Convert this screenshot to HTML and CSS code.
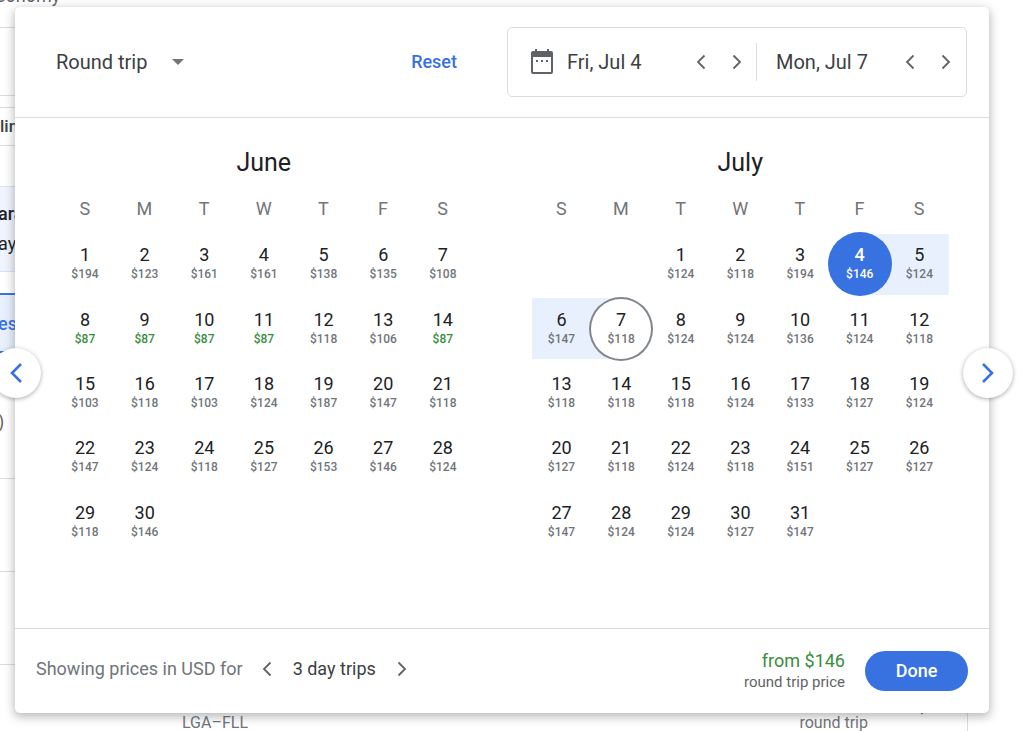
FILE: index.html
```html
<!DOCTYPE html>
<html lang="en">
  <head>
    <meta charset="UTF-8" />
    <meta name="viewport" content="width=device-width, initial-scale=1.0" />
    <title>Flights - pick dates</title>
    <link rel="stylesheet" href="styles.css">
  </head>
  <body>
    <!-- results page behind the dialog -->
    <div class="results">
      <div class="cabin">conomy</div>
      <div class="search-box"></div>
      <div class="chip">lines</div>
      <div class="track">
        <b>arate</b>
        <span>ay</span>
      </div>
      <div class="tab">es</div>
      <div class="row first">)</div>
      <div class="row"></div>
      <div class="row"></div>
      <div class="flight">
        <span class="route">LGA–FLL</span>
        <span class="fare">round trip</span>
        <svg class="expand" viewBox="0 0 16 10"><path d="M2 2l6 6 6-6" /></svg>
      </div>
    </div>

    <div class="dialog" role="dialog" aria-label="Choose dates">
      <div class="header">
        <div class="trip-type">
          <select aria-label="Trip type">
            <option>Round trip</option>
            <option>One way</option>
          </select>
          <svg class="caret" viewBox="0 0 12 6"><path d="M0 0h12L6 6z" /></svg>
        </div>
        <button class="reset">Reset</button>
        <div class="dates">
          <div class="field depart">
            <svg class="cal-icon" viewBox="0 0 24 26">
              <path fill-rule="evenodd" d="M5 0h2v2h10V0h2v2h2a2 2 0 0 1 2 2v19a2 2 0 0 1-2 2H3a2 2 0 0 1-2-2V4a2 2 0 0 1 2-2h2zM3 8v15h18V8z" />
              <path d="M6 11h2v2H6zM11 11h2v2h-2zM16 11h2v2h-2z" />
            </svg>
            <input type="text" value="Fri, Jul 4" aria-label="Departure">
            <button class="step" aria-label="Earlier departure"><svg viewBox="0 0 10 16"><path d="M8.5 1.5L2 8l6.5 6.5" /></svg></button>
            <button class="step" aria-label="Later departure"><svg viewBox="0 0 10 16"><path d="M1.5 1.5L8 8l-6.5 6.5" /></svg></button>
          </div>
          <div class="field return">
            <input type="text" value="Mon, Jul 7" aria-label="Return">
            <button class="step" aria-label="Earlier return"><svg viewBox="0 0 10 16"><path d="M8.5 1.5L2 8l6.5 6.5" /></svg></button>
            <button class="step" aria-label="Later return"><svg viewBox="0 0 10 16"><path d="M1.5 1.5L8 8l-6.5 6.5" /></svg></button>
          </div>
        </div>
      </div>

      <div class="months">
        <div class="month">
          <h2>June</h2>
          <table id="june"></table>
        </div>
        <div class="month">
          <h2>July</h2>
          <table id="july"></table>
        </div>
      </div>

      <div class="footer">
        <div class="trip-length">
          <span class="showing">Showing prices in USD for</span>
          <button class="step" aria-label="Shorter trip"><svg viewBox="0 0 10 16"><path d="M8.5 1.5L2 8l6.5 6.5" /></svg></button>
          <span class="length">3 day trips</span>
          <button class="step" aria-label="Longer trip"><svg viewBox="0 0 10 16"><path d="M1.5 1.5L8 8l-6.5 6.5" /></svg></button>
        </div>
        <div class="total">
          <div class="from">from $146</div>
          <div class="note">round trip price</div>
        </div>
        <button class="done">Done</button>
      </div>

      <button class="nav prev" aria-label="Previous month"><svg viewBox="0 0 14 22"><path d="M12 2l-9 9 9 9" /></svg></button>
      <button class="nav next" aria-label="Next month"><svg viewBox="0 0 14 22"><path d="M2 2l9 9-9 9" /></svg></button>
    </div>

    <script src="script.js"></script>
  </body>
</html>
```

FILE: styles.css
```css
* {
  margin: 0;
  padding: 0;
  box-sizing: border-box;
}

body {
  position: relative;
  height: 100vh;
  overflow: hidden;
  background: #fff;
  color: #202124;
  font-family: Roboto, "Liberation Sans", sans-serif;
  font-size: 18px;
}

button, input, select {
  border: none;
  outline: none;
  background: transparent;
  color: inherit;
  font-family: inherit;
}

button, select {
  cursor: pointer;
}

svg {
  display: block;
}

/* page behind */
.results {
  margin-right: 56px;
}

.cabin {
  height: 41px;
  margin-top: -13px;
  margin-left: -4px;
  border-bottom: 1px solid #dadce0;
  color: #5f6368;
  line-height: 18px;
}

.search-box {
  height: 68px;
  border-bottom: 1px solid #dadce0;
}

.chip {
  height: 39px;
  margin-top: 11px;
  border: 1px solid #dadce0;
  border-width: 1px 0;
  line-height: 37px;
  font-size: 17px;
  font-weight: 500;
  color: #3c4043;
}

.track {
  height: 86px;
  margin-top: 40px;
  padding-top: 12px;
  margin-left: -2px;
  border: 1px solid #d2e3fc;
  border-width: 1px 0;
  background: #f0f4fe;
  line-height: 30px;
}

.track b, .track span {
  display: block;
}

.track b {
  font-weight: 500;
}

.tab {
  height: 60px;
  margin-top: 21px;
  margin-left: -2px;
  border: 2px solid #3871e0;
  border-width: 2px 0;
  background: #e8f0fe;
  color: #3871e0;
  font-weight: 500;
  line-height: 58px;
}

.row {
  height: 93px;
  border-bottom: 1px solid #dadce0;
  color: #5f6368;
}

.row.first {
  height: 126px;
  margin-left: -2px;
  line-height: 138px;
}

.flight {
  display: flex;
  align-items: flex-start;
  height: 66px;
  padding: 40px 37px 0 182px;
  border-right: 1px solid #dadce0;
  font-size: 16px;
  line-height: 16px;
  color: #70757a;
}

.route, .fare {
  margin-top: 10px;
}

.fare {
  margin-left: auto;
}

.expand {
  width: 16px;
  margin-left: 46px;
  fill: none;
  stroke: #5f6368;
  stroke-width: 2;
}

/* dialog */
.dialog {
  position: absolute;
  top: 7px;
  left: 15px;
  right: 35px;
  border-radius: 5px;
  background: #fff;
  box-shadow: 0 3px 10px 1px rgba(60, 64, 67, .36);
}

.header {
  display: flex;
  align-items: center;
  height: 111px;
  padding: 0 22px 0 41px;
  border-bottom: 1px solid #dadce0;
}

.trip-type {
  display: flex;
  align-items: center;
  position: relative;
}

.trip-type select {
  appearance: none;
  width: 130px;
  height: 40px;
  font-size: 20px;
  color: #3c4043;
}

.caret {
  position: absolute;
  right: 2px;
  width: 12px;
  fill: #70757a;
  pointer-events: none;
}

.reset {
  margin-left: auto;
  margin-right: 50px;
  padding-bottom: 2px;
  font-size: 18px;
  font-weight: 500;
  color: #3871e0;
}

.dates {
  display: flex;
  align-items: center;
  width: 460px;
  height: 70px;
  border: 1px solid #dadce0;
  border-radius: 5px;
}

.field {
  display: flex;
  align-items: center;
  height: 38px;
}

.field input {
  flex: 1;
  min-width: 0;
  font-size: 20px;
  color: #3c4043;
}

.depart {
  width: 248px;
  padding-left: 22px;
  padding-right: 1px;
}

.return {
  flex: 1;
  min-width: 0;
  padding-left: 19px;
  padding-right: 2px;
  border-left: 1px solid #dadce0;
}

.cal-icon {
  width: 24px;
  margin-right: 13px;
  fill: #5f6368;
}

.step {
  display: flex;
  justify-content: center;
  align-items: center;
  width: 36px;
  height: 36px;
}

.step svg {
  width: 10px;
  fill: none;
  stroke: #5f6368;
  stroke-width: 1.8;
}

/* calendars */
.months {
  display: flex;
  gap: 59px;
  height: 510px;
  padding: 28px 40px 0;
}

.month {
  flex: 1;
}

.month h2 {
  font-size: 25px;
  font-weight: 400;
  line-height: 34px;
  text-align: center;
}

.month table {
  width: 100%;
  height: 374px;
  table-layout: fixed;
  border-collapse: collapse;
}

.month th {
  height: 52px;
  padding-top: 8px;
  padding-bottom: 4px;
  font-weight: 400;
  color: #70757a;
}

.month td {
  text-align: center;
  background: no-repeat center / 100% 61px;
}

.day {
  position: relative;
  display: block;
  width: 64px;
  height: 64px;
  margin: 0 -2px;
  border-radius: 50%;
  font-size: 18px;
}

.day b, .day span {
  display: block;
  font-weight: 400;
  line-height: 20px;
}

.day span {
  font-size: 12px;
  font-weight: 500;
  line-height: 18px;
  color: #70757a;
}

.day .cheap {
  color: #388e3c;
}

td.between, td.start, td.end {
  background-image: linear-gradient(#e8f0fe, #e8f0fe);
}

td.start {
  background-size: 50% 61px;
  background-position: right;
}

td.end {
  background-size: 50% 61px;
  background-position: left;
}

.start .day, .start .day span {
  color: #fff;
}

.start .day {
  background: #3871e0;
}

.start .day b {
  font-weight: 500;
}

.end .day {
  background: #fff;
  box-shadow: inset 0 0 0 2px #80868b;
}

/* bottom bar */
.footer {
  display: flex;
  align-items: center;
  height: 85px;
  padding: 0 21px;
  border-top: 1px solid #dadce0;
}

.trip-length {
  display: flex;
  align-items: center;
  padding-bottom: 5px;
}

.showing {
  margin-right: 6px;
  color: #70757a;
}

.length {
  margin: 0 8px;
  color: #3c4043;
}

.total {
  margin-left: auto;
  text-align: right;
}

.from {
  line-height: 22px;
  color: #388e3c;
}

.note {
  font-size: 15px;
  line-height: 20px;
  color: #5f6368;
}

.done {
  width: 103px;
  height: 40px;
  margin-left: 20px;
  padding-bottom: 2px;
  border-radius: 20px;
  background: #3871e0;
  color: #fff;
  font-size: 18px;
  font-weight: 500;
}

/* month arrows on the dialog edges */
.nav {
  position: absolute;
  top: 341px;
  display: flex;
  justify-content: center;
  align-items: center;
  width: 50px;
  height: 50px;
  border-radius: 50%;
  background: #fff;
  box-shadow: 0 1px 4px rgba(60, 64, 67, .45);
}

.nav svg {
  width: 14px;
  fill: none;
  stroke: #3871e0;
  stroke-width: 2.6;
}

.prev {
  left: -24px;
}

.next {
  right: -24px;
}
```

FILE: script.js
```js
const weekdays = ["S", "M", "T", "W", "T", "F", "S"];

const june = [
  194, 123, 161, 161, 138, 135, 108,
  87, 87, 87, 87, 118, 106, 87,
  103, 118, 103, 124, 187, 147, 118,
  147, 124, 118, 127, 153, 146, 124,
  118, 146
];

const july = [
  124, 118, 194, 146, 124,
  147, 118, 124, 124, 136, 124, 118,
  118, 118, 118, 124, 133, 127, 124,
  127, 118, 124, 118, 151, 127, 127,
  147, 124, 124, 127, 147
];

// offset = weekday of the 1st, marks = class for a given day
function drawMonth(id, prices, offset, marks) {
  let html = "<thead><tr>";
  weekdays.forEach(day => {
    html += `<th scope="col">${day}</th>`;
  });
  html += "</tr></thead><tbody>";

  for (let i = 0; i < 35; i++) {
    if (i % 7 === 0) html += "<tr>";
    let day = i - offset + 1;
    let price = prices[day - 1];
    if (price) {
      let cheap = price < 100 ? "cheap" : "";
      html += `<td class="${marks[day] || ""}"><button class="day"><b>${day}</b><span class="${cheap}">$${price}</span></button></td>`;
    }
    else {
      html += "<td></td>";
    }
    if (i % 7 === 6) html += "</tr>";
  }

  document.getElementById(id).innerHTML = html + "</tbody>";
}

drawMonth("june", june, 0, {});
drawMonth("july", july, 2, { 4: "start", 5: "between", 6: "between", 7: "end" });
```
